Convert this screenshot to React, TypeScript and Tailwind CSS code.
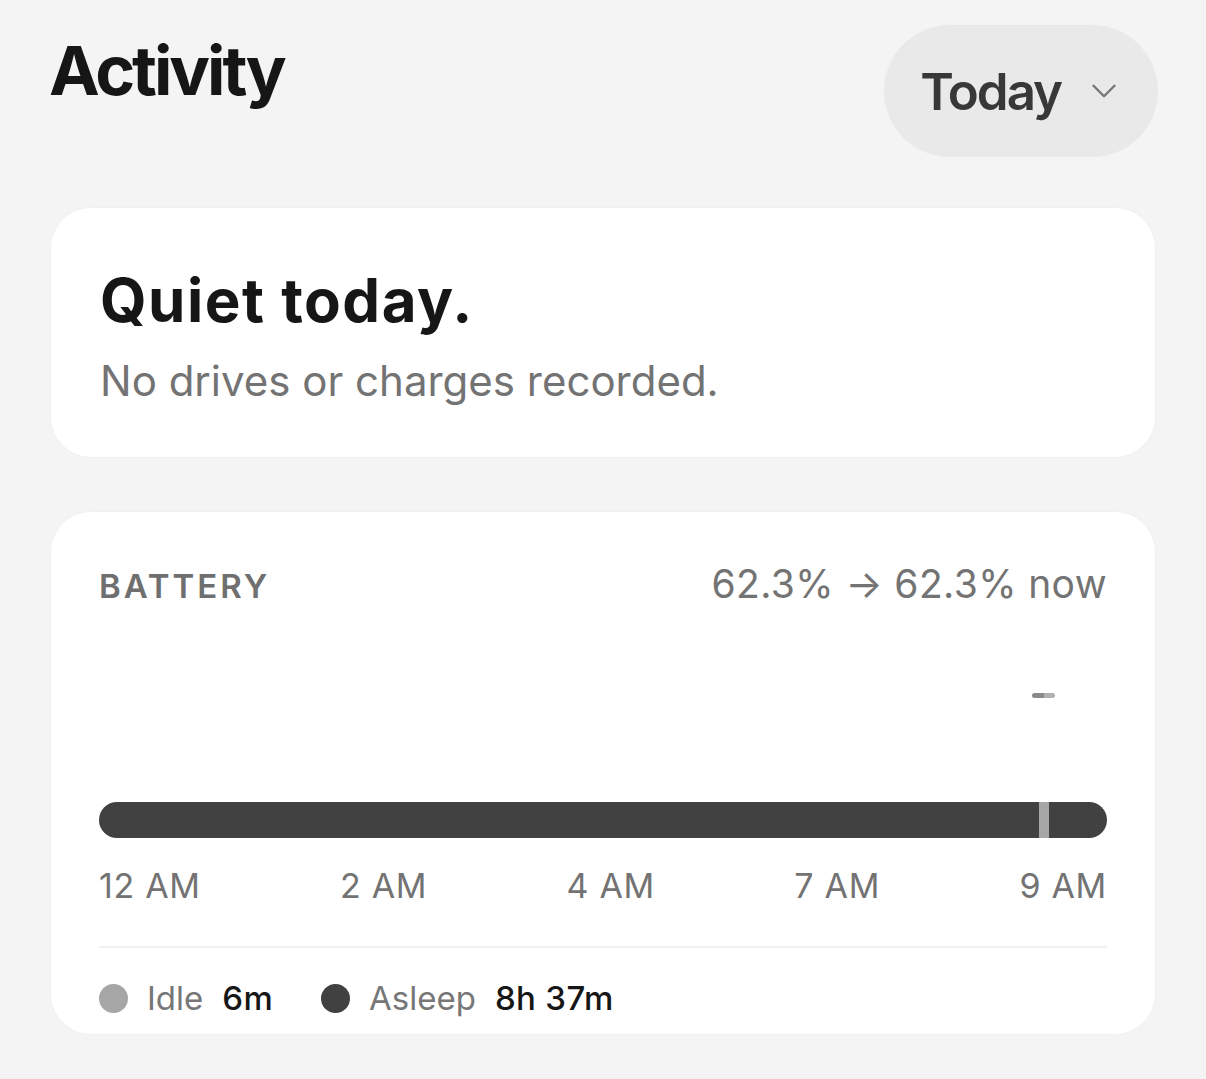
import React from 'react';
import { ChevronDown } from 'lucide-react';

const ticks = ['12 AM', '2 AM', '4 AM', '7 AM', '9 AM'];

const legend = [
  { label: 'Idle', value: '6m', dot: 'bg-[#a6a6a6]' },
  { label: 'Asleep', value: '8h 37m', dot: 'bg-[#414141]' },
];

export default function App() {
  return (
    <div className="min-h-screen bg-[#f4f4f4] px-[51px] pt-[25px] pb-[46px] font-['Inter','Noto_Sans',sans-serif] antialiased">
      {/* Header */}
      <div className="-mr-[3px] flex items-start justify-between">
        <h1 className="-ml-[2px] mt-[11px] text-[68px] leading-[68px] font-bold tracking-[-0.045em] text-[#161616]">Activity</h1>
        <button className="flex h-[132px] items-center gap-[22px] rounded-full bg-[#e9e9e9] pl-[36px] pr-[33px]">
          <span className="text-[51px] leading-none font-semibold tracking-[-0.04em] text-[#383838]">Today</span>
          <ChevronDown size={42} strokeWidth={1.4} className="text-[#777777]" />
        </button>
      </div>

      {/* Summary card */}
      <div className="mt-[51px] rounded-[40px] bg-white px-[49px] pt-[62px] pb-[55px] shadow-[0_0_0_1px_rgba(0,0,0,0.015)]">
        <h2 className="text-[60px] leading-[60px] font-bold tracking-[0.025em] text-[#161616]">Quiet today.</h2>
        <p className="mt-[30px] text-[42px] leading-[42px] text-[#737373]">No drives or charges recorded.</p>
      </div>

      {/* Battery card */}
      <div className="mt-[55px] rounded-[40px] bg-white px-[48px] pt-[55px] pb-[19px] shadow-[0_0_0_1px_rgba(0,0,0,0.015)]">
        <div className="flex items-baseline justify-between">
          <span className="text-[33px] leading-[33px] font-semibold tracking-[0.09em] text-[#6f6f6f]">BATTERY</span>
          <span className="text-[39px] leading-[33px] tracking-[0.01em] text-[#737373]">62.3% → 62.3% now</span>
        </div>

        {/* chart */}
        <div className="relative h-[199px]">
          <div className="absolute left-[933px] top-[90px] flex h-[5px] w-[23px] overflow-hidden rounded-full">
            <span className="h-full w-1/2 bg-[#8a8a8a]" />
            <span className="h-full w-1/2 bg-[#b0b0b0]" />
          </div>
        </div>

        <div className="relative h-[36px] rounded-full bg-[#414141]">
          <div className="absolute left-[940px] top-0 h-full w-[10px] bg-[#a6a6a6]" />
        </div>

        <div className="mt-[31px] flex justify-between">
          {ticks.map(t => (
            <span key={t} className="text-[34px] leading-[33px] tracking-[0.02em] text-[#737373]">{t}</span>
          ))}
        </div>

        <div className="mt-[44px] h-[2px] bg-[#f0f0f0]" />

        <div className="mt-[34px] flex items-center">
          {legend.map((l, i) => (
            <div key={l.label} className={`flex items-center ${i > 0 ? 'ml-[48px]' : ''}`}>
              <span className={`h-[29px] w-[29px] rounded-full ${l.dot}`} />
              <span className="ml-[19px] text-[33px] leading-[33px] text-[#777777]">{l.label}</span>
              <span className="ml-[19px] text-[33px] leading-[33px] font-medium tracking-[0.01em] text-[#161616]">{l.value}</span>
            </div>
          ))}
        </div>
      </div>
    </div>
  );
}
